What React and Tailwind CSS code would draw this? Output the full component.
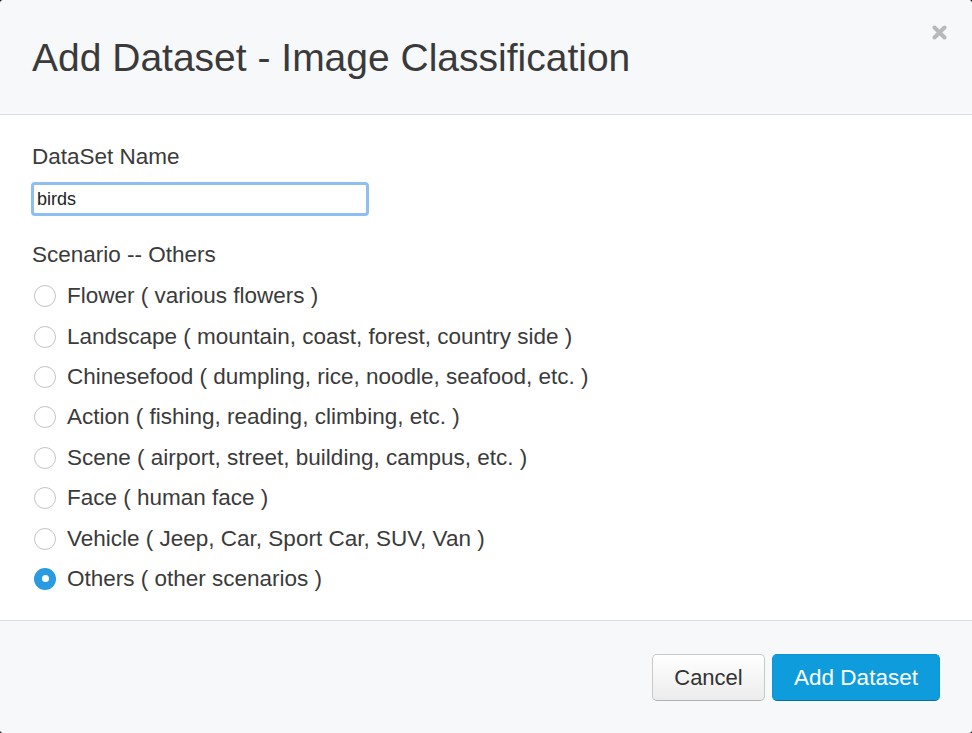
const scenarios = [
  { label: "Flower ( various flowers )" },
  { label: "Landscape ( mountain, coast, forest, country side )" },
  { label: "Chinesefood ( dumpling, rice, noodle, seafood, etc. )" },
  { label: "Action ( fishing, reading, climbing, etc. )" },
  { label: "Scene ( airport, street, building, campus, etc. )" },
  { label: "Face ( human face )" },
  { label: "Vehicle ( Jeep, Car, Sport Car, SUV, Van )" },
  { label: "Others ( other scenarios )", checked: true },
];

function Radio({ checked }) {
  if (checked) {
    return (
      <span className="flex h-[22px] w-[22px] shrink-0 items-center justify-center rounded-full bg-[#2a9be0]">
        <span className="h-[7px] w-[7px] rounded-full bg-white" />
      </span>
    );
  }
  return <span className="h-[22px] w-[22px] shrink-0 rounded-full border border-[#c4c4c4] bg-white" />;
}

export default function App() {
  return (
    <div className="h-[733px] w-[972px] bg-[#2b2b2b] font-['Liberation_Sans',Arial,sans-serif] text-[#3b3b3b]">
      <div className="flex h-full w-full flex-col overflow-hidden rounded-[4px] bg-white">
        {/* header */}
        <div className="relative h-[115px] shrink-0 border-b border-[#d9dee4] bg-[#f7f8fa] pl-[32px] pt-[33px]">
          <h1 className="text-[39px] leading-[50px] text-[#3a3a3a]">
            Add Dataset - Image Classification
          </h1>
          <svg
            className="absolute right-[25px] top-[25px]"
            width="15"
            height="15"
            viewBox="0 0 15 15"
          >
            <path d="M2.5 2.5 L12.5 12.5 M12.5 2.5 L2.5 12.5" stroke="#b9b9b9" strokeWidth="4" strokeLinecap="round" />
          </svg>
        </div>

        {/* body */}
        <div className="h-[505px] shrink-0 px-[32px] pt-[30px]">
          <div className="text-[22.5px] leading-[24px]">DataSet Name</div>
          <input
            defaultValue="birds"
            className="-ml-[1px] mt-[13px] block h-[34px] w-[338px] rounded-[4px] border-[3px] border-[#8ebef3] bg-white px-[3px] text-[18px] text-[#222] outline-none"
          />
          <div className="mt-[27px] text-[22.5px] leading-[24px]">Scenario -- Others</div>
          <div className="mt-[9px] flex flex-col">
            {scenarios.map((s) => (
              <label key={s.label} className="flex h-[40.4px] items-center gap-[11px] pl-[2px]">
                <Radio checked={s.checked} />
                <span className="text-[22.5px] leading-[24px]">{s.label}</span>
              </label>
            ))}
          </div>
        </div>

        {/* footer */}
        <div className="flex flex-1 items-start justify-end gap-[7px] border-t border-[#d9dee4] bg-[#f7f8fa] pr-[32px] pt-[33px]">
          <button className="h-[47px] w-[113px] rounded-[5px] border border-[#c9c9c9] border-b-[#b3b3b3] bg-gradient-to-b from-white to-[#ececec] text-[22px] text-[#333]">
            Cancel
          </button>
          <button className="h-[47px] w-[168px] rounded-[5px] border border-[#0e95d4] border-b-[#0a6f9e] bg-[#0f9cdd] text-[22.5px] text-white">
            Add Dataset
          </button>
        </div>
      </div>
    </div>
  );
}
